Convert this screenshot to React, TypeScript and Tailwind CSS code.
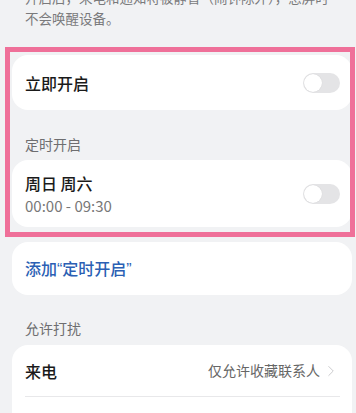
import { ChevronRight } from "lucide-react";

function Toggle() {
  return (
    <div className="relative h-[20px] w-[37px] rounded-full bg-[#e4e4e6]">
      <div className="absolute left-[1px] top-[1px] h-[18px] w-[18px] rounded-full bg-white shadow-[0_0_1px_rgba(0,0,0,0.15)]" />
    </div>
  );
}

export default function App() {
  return (
    <div className="relative h-[413px] w-[356px] overflow-hidden bg-[#f1f2f4] font-['Noto_Sans_CJK_SC','Noto_Sans',sans-serif]">
      <p className="mt-[-13px] whitespace-nowrap px-[25px] text-[13.5px] leading-[21px] text-[#7a7a7c]">
        开启后，来电和通知将被静音（闹钟除外），息屏时
        <br />
        不会唤醒设备。
      </p>

      <div className="ml-3 mr-1 mt-[26px] flex h-[55px] items-center justify-between rounded-[16px] bg-white pl-[13px] pr-[12px]">
        <span className="text-[16px] font-medium text-[#1a1a1a]">立即开启</span>
        <Toggle />
      </div>

      <p className="mt-[24px] px-[25px] text-[14px] leading-[20px] text-[#6e6e70]">定时开启</p>

      <div className="ml-3 mr-1 mt-[6px] flex h-[67px] items-center justify-between rounded-[16px] bg-white pl-[13px] pr-[12px]">
        <div className="flex flex-col">
          <span className="text-[16px] font-medium leading-[24px] text-[#1a1a1a]">周日 周六</span>
          <span className="text-[15px] leading-[22px] text-[#777]">00:00 - 09:30</span>
        </div>
        <Toggle />
      </div>

      <div className="ml-3 mr-1 mt-[15px] flex h-[53px] items-center rounded-[16px] bg-white pl-[13px]">
        <span className="text-[16px] font-medium text-[#2b5fb4]">
          添加<span className="font-['Liberation_Sans',sans-serif]">“</span>定时开启<span className="font-['Liberation_Sans',sans-serif]">”</span>
        </span>
      </div>

      <p className="mt-[23px] px-[25px] text-[14px] leading-[20px] text-[#6e6e70]">允许打扰</p>

      <div className="ml-3 mr-1 mt-[7px] rounded-[16px] bg-white pl-[13px] pr-[12px]">
        <div className="flex h-[52px] items-center justify-between border-b border-[#e8e8ea]">
          <span className="text-[16px] font-medium text-[#1a1a1a]">来电</span>
          <div className="flex items-center gap-[2px]">
            <span className="text-[14px] text-[#666]">仅允许收藏联系人</span>
            <ChevronRight className="h-[18px] w-[18px] text-[#c8c8ca]" strokeWidth={1.25} />
          </div>
        </div>
        <div className="h-[40px]" />
      </div>

      <div className="pointer-events-none absolute left-[5px] top-[47px] h-[190px] w-[350px] border-[5px] border-[#ef7099]" />
    </div>
  );
}
